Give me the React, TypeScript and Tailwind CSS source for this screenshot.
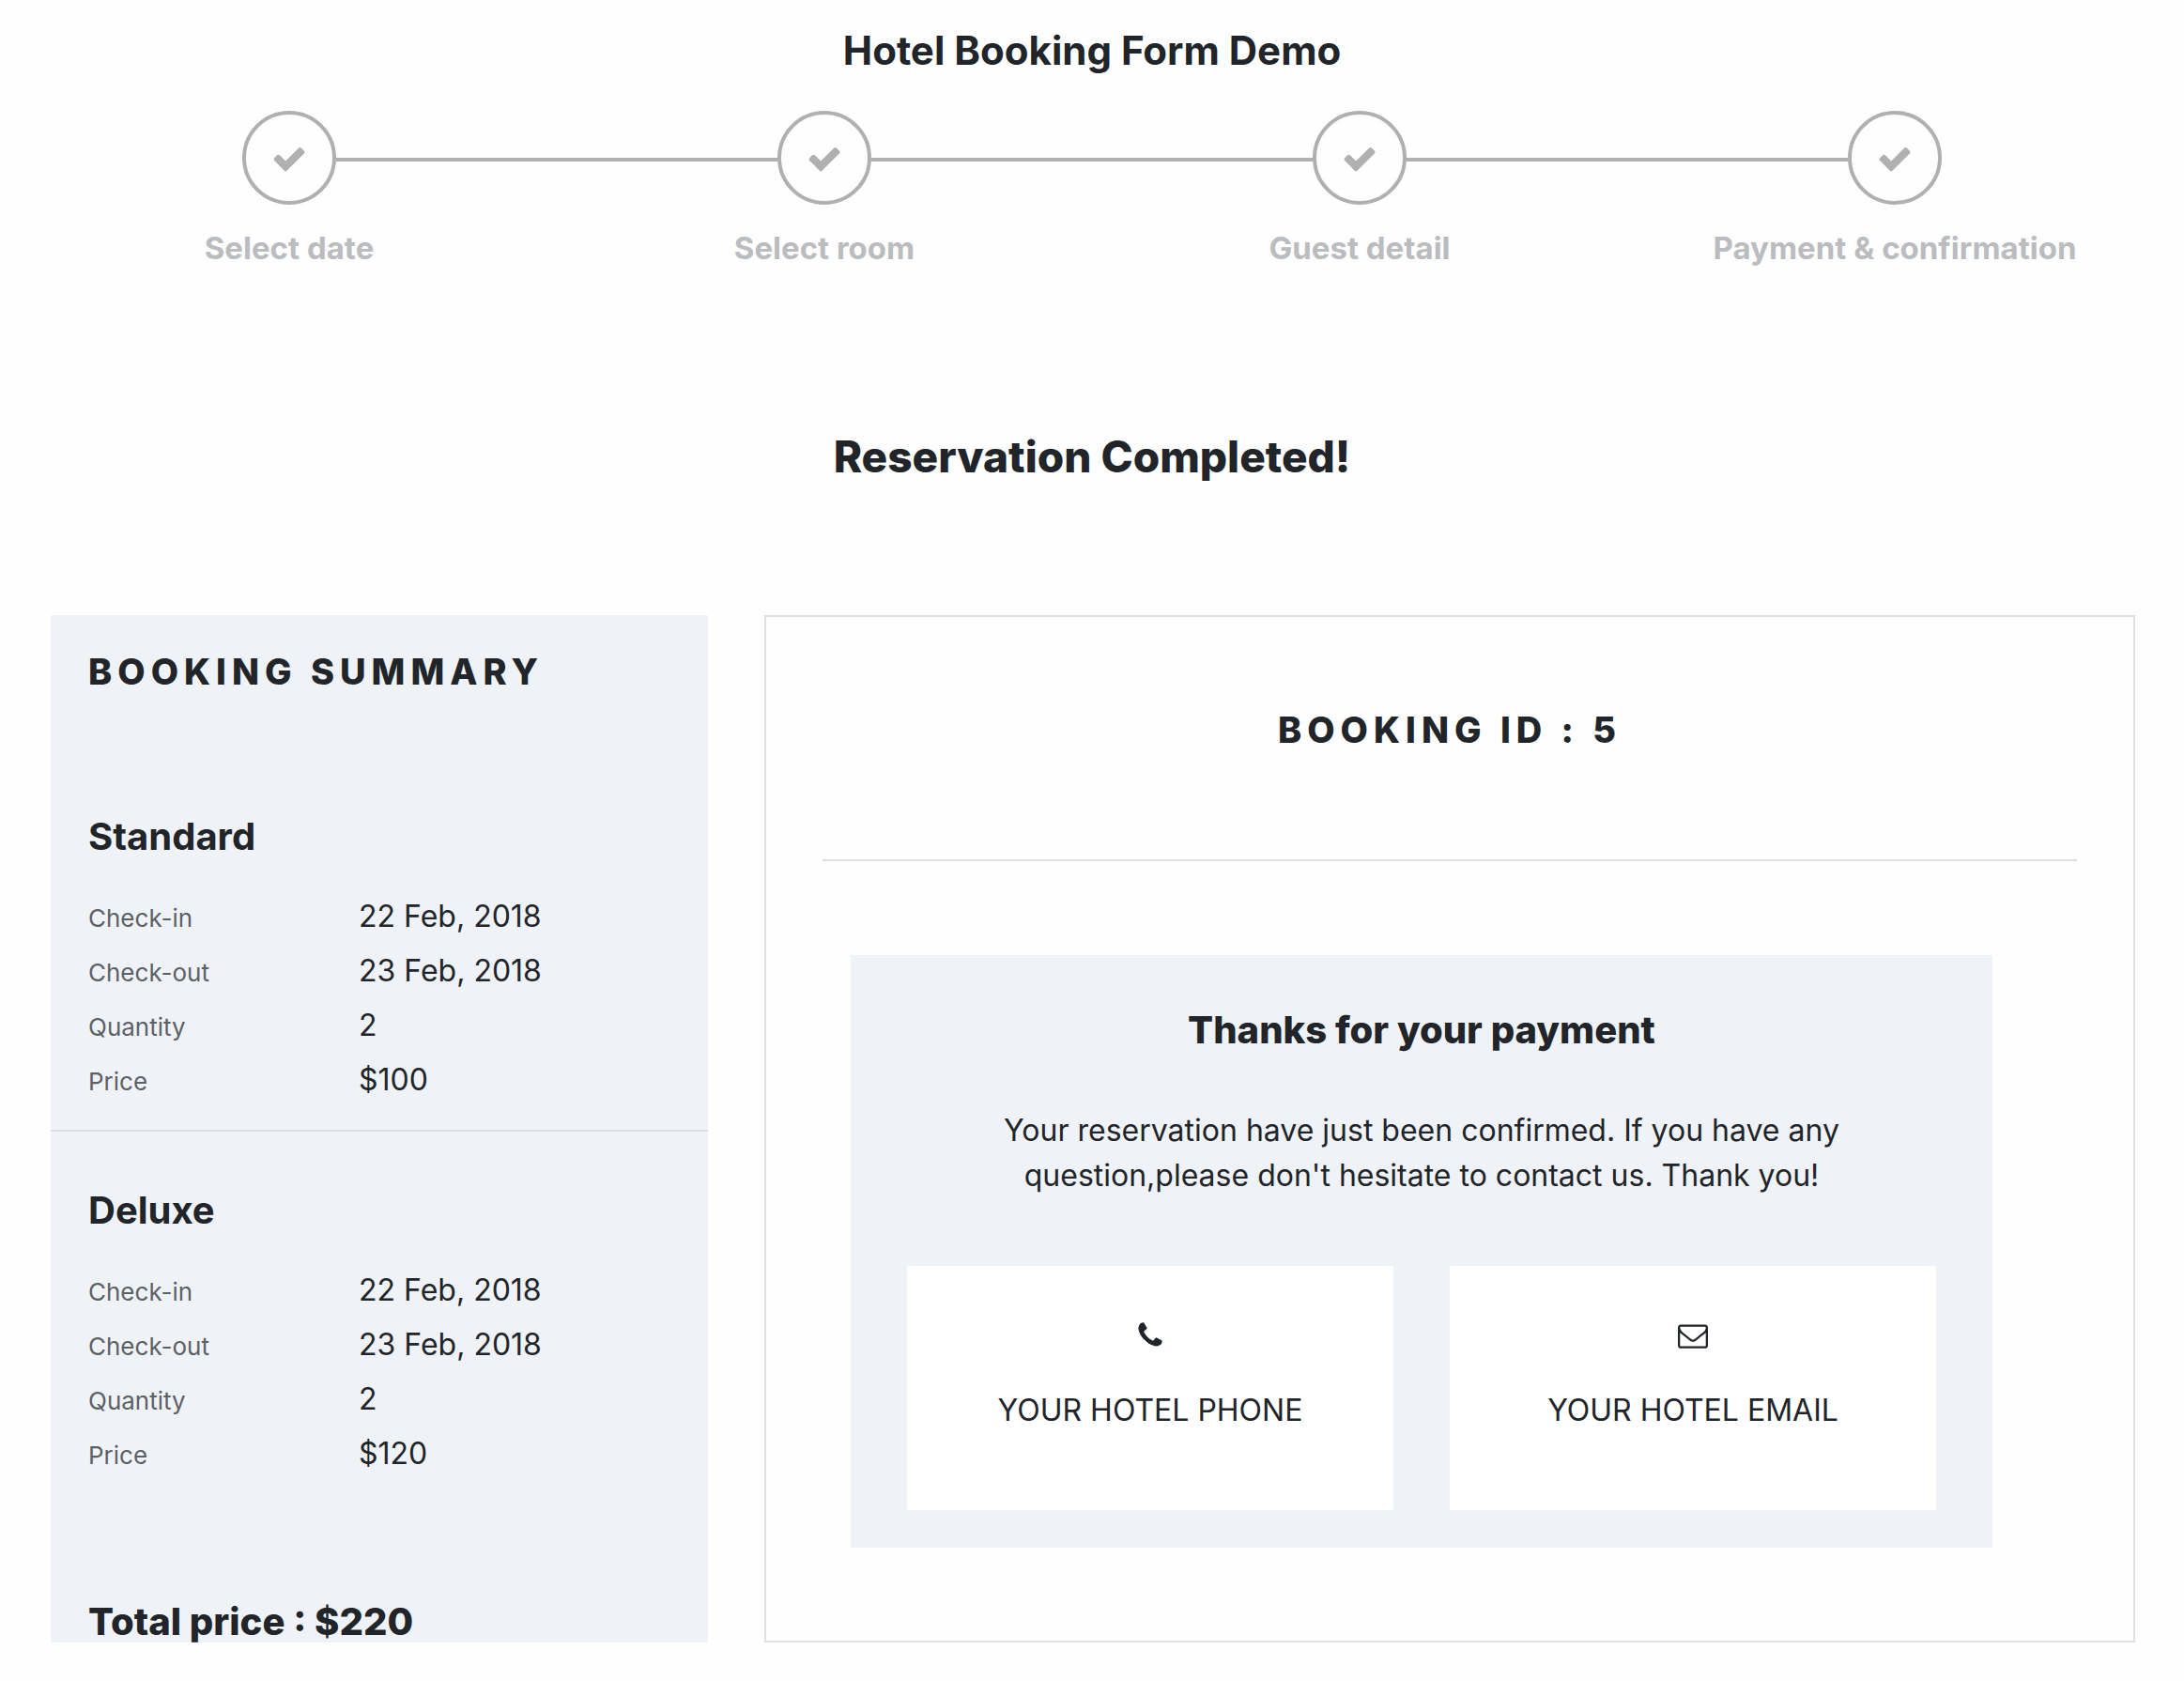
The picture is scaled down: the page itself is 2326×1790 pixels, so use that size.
import React from "react";

const steps = ["Select date", "Select room", "Guest detail", "Payment & confirmation"];

const rooms = [
  { name: "Standard", price: "$100" },
  { name: "Deluxe", price: "$120" },
];

const checkPath =
  "M1671 566q0 40-28 68l-724 724-136 136q-28 28-68 28t-68-28l-136-136-362-362q-28-28-28-68t28-68l136-136q28-28 68-28t68 28l294 295 656-657q28-28 68-28t68 28l136 136q28 28 28 68z";
const phonePath =
  "M1600 1240q0 27-10 70.5t-21 68.5q-21 50-122 106-94 51-186 51-27 0-53-3.5t-57-12.5-47-14.5-55.5-20.5-49.5-18q-98-35-175-83-127-79-264-216t-216-264q-48-77-83-175-3-9-18-49.5t-20.5-55.5-14.5-47-12.5-57-3.5-53q0-92 51-186 56-101 106-122 25-11 68.5-21t70.5-10q14 0 21 3 18 6 53 76 11 19 30 54t35 63.5 31 53.5q3 4 17.5 25t21.5 35.5 7 28.5q0 20-28.5 50t-62 55-62 53-28.5 46q0 9 5 22.5t8.5 20.5 14 24 11.5 19q76 137 174 235t235 174q2 1 19 11.5t24 14 20.5 8.5 22.5 5q18 0 46-28.5t53-62 55-62 50-28.5q14 0 28.5 7t35.5 21.5 25 17.5q25 15 53.5 31t63.5 35 54 30q70 35 76 53 3 7 3 21z";
const envelopePath =
  "M1664 1504v-768q-32 36-69 66-268 206-426 338-51 43-83 67t-86.5 48.5-102.5 24.5h-2q-48 0-102.5-24.5t-86.5-48.5-83-67q-158-132-426-338-37-30-69-66v768q0 13 9.5 22.5t22.5 9.5h1472q13 0 22.5-9.5t9.5-22.5zm0-1051v-24.5l-.5-13-3-12.5-5.5-9-9-7.5-14-2.5h-1472q-13 0-22.5 9.5t-9.5 22.5q0 168 147 284 193 152 401 317 6 5 35 29.5t46 37.5 44.5 31.5 50.5 27.5 43 9h2q20 0 43-9t50.5-27.5 44.5-31.5 46-37.5 35-29.5q208-165 401-317 54-43 100.5-115.5t46.5-131.5zm128-37v1088q0 66-47 113t-113 47h-1472q-66 0-113-47t-47-113v-1088q0-66 47-113t113-47h1472q66 0 113 47t47 113z";

function Icon({ path, size }: { path: string; size: number }) {
  return (
    <svg viewBox="0 0 1792 1792" width={size} height={size} fill="currentColor" aria-hidden="true">
      <path d={path} />
    </svg>
  );
}

function Steps() {
  return (
    <ol className="mt-10 grid grid-cols-[repeat(3,1fr)_0px] px-[308px]">
      {steps.map((label, i) => (
        <li key={label} className="flex h-[164px] items-start">
          <div className="flex w-0 shrink-0 flex-col items-center">
            <span className="flex size-[100px] items-center justify-center rounded-full border-4 border-[#b0b0b0] pt-0.5 text-[#b0b0b0]">
              <Icon path={checkPath} size={38} />
            </span>
            <span className="mt-6 text-[33px] leading-[44px] font-bold whitespace-nowrap text-[#bbbcbf]">{label}</span>
          </div>
          {i < steps.length - 1 && <span className="mx-[50px] mt-[50px] h-1 flex-1 bg-[#b0b0b0]" />}
        </li>
      ))}
    </ol>
  );
}

function Room({ name, price }: { name: string; price: string }) {
  const rows = [
    ["Check-in", "22 Feb, 2018"],
    ["Check-out", "23 Feb, 2018"],
    ["Quantity", "2"],
    ["Price", price],
  ];
  return (
    <section className="px-10">
      <h3 className="text-[40px] leading-[48px] font-bold">{name}</h3>
      <dl className="mt-8">
        {rows.map(([term, value]) => (
          <div key={term} className="grid h-[58px] grid-cols-[288px_1fr] items-baseline leading-[58px]">
            <dt className="text-[26px] text-[#5d6166]">{term}</dt>
            <dd className="text-[32px]">{value}</dd>
          </div>
        ))}
      </dl>
    </section>
  );
}

function Contact({ path, label }: { path: string; label: string }) {
  return (
    <div className="flex h-[260px] flex-col items-center bg-white pt-[58px]">
      <Icon path={path} size={32} />
      <p className="mt-10 text-[32px] leading-[48px]">{label}</p>
    </div>
  );
}

export default function App() {
  return (
    <main className="min-h-screen bg-[#fefefe] pt-[30px] pb-10 font-['Inter',sans-serif] text-[#212529]">
      <h1 className="text-center text-[42px] leading-[48px] font-bold">Hotel Booking Form Demo</h1>
      <Steps />
      <h2 className="mt-[174px] text-center text-[46px] leading-[60px] font-extrabold">Reservation Completed!</h2>
      <div className="mt-[139px] grid grid-cols-[700px_1fr] gap-[60px] pr-[52px] pl-[54px]">
        <aside className="bg-[#eff3f7] pt-9">
          <h2 className="px-10 text-[38px] leading-[48px] font-extrabold tracking-[6px]">BOOKING SUMMARY</h2>
          <div className="pt-32">
            <Room {...rooms[0]} />
          </div>
          <hr className="mt-6 mb-15 border-t-2 border-[#dcdfe3]" />
          <Room {...rooms[1]} />
          <p className="mt-32 px-10 text-[40px] leading-[44px] font-extrabold">Total price : $220</p>
        </aside>
        <section className="border-2 border-[#dfdfe1] px-[60px] pt-[96px] text-center">
          <h2 className="text-[38px] leading-[48px] font-extrabold tracking-[6px]">BOOKING ID : 5</h2>
          <hr className="mt-[114px] border-t-2 border-[#dfdfe1]" />
          <div className="mt-[100px] mr-[90px] ml-[30px] bg-[#eff3f7] px-[60px] py-10">
            <h3 className="text-[40px] leading-[80px] font-extrabold">Thanks for your payment</h3>
            <p className="mx-auto mt-[43px] max-w-[920px] text-[32px] leading-[48px]">
              Your reservation have just been confirmed. If you have any question,please don't hesitate to contact us. Thank you!
            </p>
            <div className="mt-[72px] grid grid-cols-2 gap-[60px]">
              <Contact path={phonePath} label="YOUR HOTEL PHONE" />
              <Contact path={envelopePath} label="YOUR HOTEL EMAIL" />
            </div>
          </div>
        </section>
      </div>
    </main>
  );
}
